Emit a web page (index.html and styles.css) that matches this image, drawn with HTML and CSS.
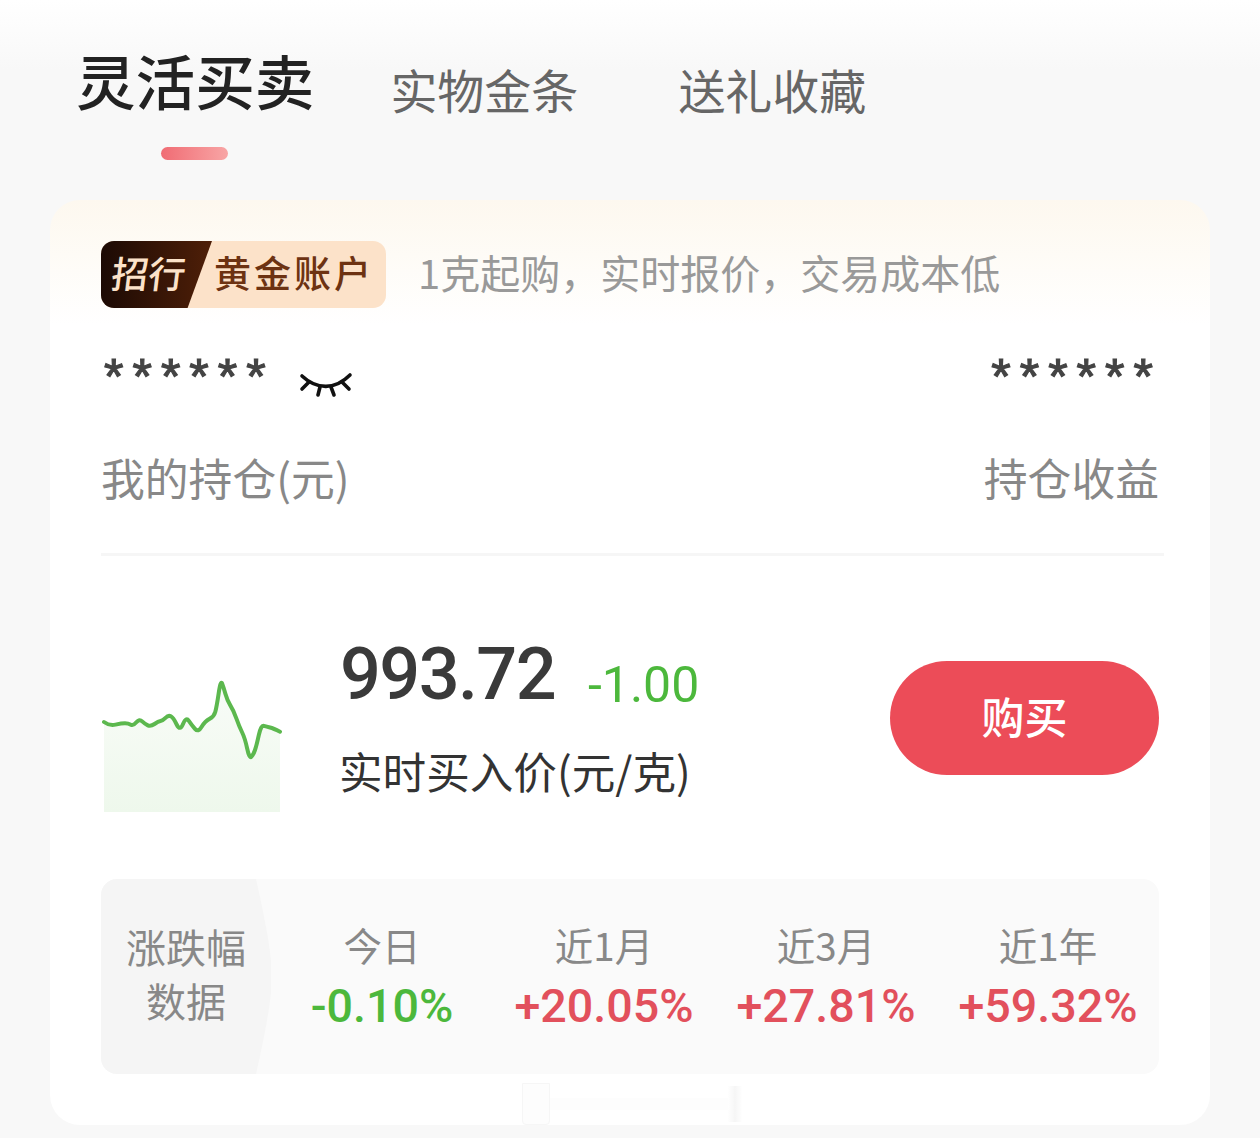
FILE: index.html
```html
<!DOCTYPE html>
<html lang="zh-CN">
<head>
  <meta charset="UTF-8" />
  <meta name="viewport" content="width=device-width, initial-scale=1.0" />
  <title>黄金账户</title>
  <link rel="stylesheet" href="styles.css">
</head>
<body>
  <nav class="tabs">
    <div class="tab tab-active">灵活买卖<span class="tab-line"></span></div>
    <div class="tab tab-second">实物金条</div>
    <div class="tab tab-third">送礼收藏</div>
  </nav>

  <main class="card">
    <div class="card-head">
      <div class="badge">
        <span class="badge-dark"><span class="badge-slant">招行</span></span>
        <span class="badge-light">黄金账户</span>
      </div>
      <p class="slogan">1克起购，实时报价，交易成本低</p>
    </div>

    <div class="holdings">
      <div class="holding">
        <div class="stars-row">
          <span class="stars">******</span>
          <svg class="eye" viewBox="0 0 54 26" width="54" height="26" fill="none" stroke="#111" stroke-width="3.6" stroke-linecap="round">
            <path d="M3 4 C18 18 36 18 51 3" />
            <path d="M3 17 L10 10" />
            <path d="M19 23 L21 15" />
            <path d="M35 23 L32 15" />
            <path d="M50 17 L43 10" />
          </svg>
        </div>
        <div class="holding-label">我的持仓(元)</div>
      </div>
      <div class="holding holding-right">
        <div class="stars-row"><span class="stars">******</span></div>
        <div class="holding-label">持仓收益</div>
      </div>
    </div>

    <div class="divider"></div>

    <div class="quote">
      <svg class="chart" viewBox="0 0 630 510" width="210" height="170">
        <defs>
          <linearGradient id="area" x1="0" y1="0" x2="0" y2="1">
            <stop offset="0" stop-color="#f9fcf8" />
            <stop offset="1" stop-color="#eef8ec" />
          </linearGradient>
        </defs>
        <path fill="url(#area)" d="M42 186 Q58 198 76.5 194 Q95 190 105 190 Q115 190 122.5 194 Q130 198 139 187 Q148 176 156.5 184 Q165 192 173.5 196 Q182 200 193.5 192 Q205 184 211.5 183 Q218 182 226.5 173.5 Q235 165 242.5 169 Q250 173 260 193.5 Q270 214 279 192 Q288 170 296.5 182.5 Q305 195 315 206.5 Q325 218 335 200.5 Q345 183 358.5 176.5 Q372 170 376 155 Q380 140 386 100 Q392 60 396 70 Q400 80 406 101 Q412 122 421 136 Q430 150 439 175 Q448 200 456.5 217.5 Q465 235 471.5 265.5 Q478 296 484 290.5 Q490 285 495 270 Q500 255 506.5 225 Q513 195 521.5 197.5 Q530 200 540 202.5 Q550 205 570 215 L570 456 L42 456 Z" />
        <path fill="none" stroke="#5cb84e" stroke-width="12" stroke-linecap="round" stroke-linejoin="round" d="M42 186 Q58 198 76.5 194 Q95 190 105 190 Q115 190 122.5 194 Q130 198 139 187 Q148 176 156.5 184 Q165 192 173.5 196 Q182 200 193.5 192 Q205 184 211.5 183 Q218 182 226.5 173.5 Q235 165 242.5 169 Q250 173 260 193.5 Q270 214 279 192 Q288 170 296.5 182.5 Q305 195 315 206.5 Q325 218 335 200.5 Q345 183 358.5 176.5 Q372 170 376 155 Q380 140 386 100 Q392 60 396 70 Q400 80 406 101 Q412 122 421 136 Q430 150 439 175 Q448 200 456.5 217.5 Q465 235 471.5 265.5 Q478 296 484 290.5 Q490 285 495 270 Q500 255 506.5 225 Q513 195 521.5 197.5 Q530 200 540 202.5 Q550 205 570 215" />
      </svg>
      <div class="price-box">
        <div class="price-row">
          <span class="price">993.72</span>
          <span class="change">-1.00</span>
        </div>
        <div class="price-label">实时买入价(元/克)</div>
      </div>
      <button class="buy" type="button">购买</button>
    </div>

    <section class="stats">
      <div class="stats-title">涨跌幅<br />数据</div>
      <div class="stat">
        <div class="stat-label">今日</div>
        <div class="stat-value down">-0.10%</div>
      </div>
      <div class="stat">
        <div class="stat-label">近1月</div>
        <div class="stat-value up">+20.05%</div>
      </div>
      <div class="stat">
        <div class="stat-label">近3月</div>
        <div class="stat-value up">+27.81%</div>
      </div>
      <div class="stat">
        <div class="stat-label">近1年</div>
        <div class="stat-value up">+59.32%</div>
      </div>
    </section>

    <div class="watermark">
      <span class="wm-box"></span>
      <span class="wm-bar"></span>
      <span class="wm-cross"></span>
    </div>
  </main>
</body>
</html>
```

FILE: styles.css
```css
body {
  margin: 0;
  height: 1138px;
  overflow: hidden;
  font-family: "Noto Sans CJK SC", "Noto Sans", sans-serif;
  background: linear-gradient(#ffffff, #f8f8f8 70px);
  color: #333;
}

/* tabs */
.tabs {
  display: flex;
  align-items: flex-start;
  height: 200px;
  padding-left: 76px;
  box-sizing: border-box;
}
.tab {
  font-size: 47px;
  line-height: 60px;
  color: #666;
  margin-top: 59px;
}
.tab-active {
  display: flex;
  flex-direction: column;
  align-items: center;
  font-size: 59.6px;
  line-height: 70px;
  font-weight: 500;
  color: #222;
  margin-top: 44px;
}
.tab-line {
  width: 67px;
  height: 13px;
  margin: 33px 1px 0 0;
  border-radius: 7px;
  background: linear-gradient(90deg, #f06c74, #f8a5a5);
}
.tab-second {
  margin-left: 76px;
}
.tab-third {
  margin-left: 100px;
}

/* card */
.card {
  position: relative;
  height: 925px;
  margin: 0 50px;
  padding: 41px 51px 0;
  box-sizing: border-box;
  border-radius: 30px;
  background: linear-gradient(#fdf8ef, #ffffff 125px);
}
.card-head {
  display: flex;
  align-items: center;
  height: 67px;
}
.badge {
  display: flex;
  width: 285px;
  height: 67px;
  border-radius: 13px;
  overflow: hidden;
  background: #fce2c9;
  font-size: 37px;
  font-weight: 500;
  line-height: 62px;
}
.badge-dark {
  width: 111px;
  padding-left: 11px;
  box-sizing: border-box;
  color: #fce2c9;
  background: linear-gradient(90deg, #1c0a04, #4f1f08);
  clip-path: polygon(0 0, 100% 0, 78% 100%, 0 100%);
}
.badge-slant {
  display: inline-block;
  transform: skewX(-7deg);
}
.badge-light {
  margin-left: 2px;
  color: #6d3212;
  letter-spacing: 3px;
}
.slogan {
  margin: -6px 0 0 32px;
  font-size: 40px;
  color: #999;
  white-space: nowrap;
}

/* holdings */
.holdings {
  display: flex;
  justify-content: space-between;
  margin-top: 34px;
}
.holding-right {
  text-align: right;
}
.stars-row {
  display: flex;
  align-items: flex-start;
  height: 103px;
}
.stars {
  font-family: "Liberation Sans", sans-serif;
  font-size: 50px;
  line-height: 58px;
  letter-spacing: 9px;
  color: #444;
  -webkit-text-stroke: 1.2px #444;
  margin: 6px 0 0 3px;
}
.holding-right .stars-row {
  justify-content: flex-end;
}
.holding-right .stars {
  margin-right: -3px;
}
.eye {
  margin: 30px 0 0 24px;
}
.holding-label {
  font-size: 43.8px;
  line-height: 64px;
  color: #888;
}

.divider {
  height: 3px;
  margin: 44px -5px 0 0;
  background: #f6f6f6;
}

/* quote */
.quote {
  display: flex;
  align-items: flex-start;
  height: 323px;
}
.chart {
  flex: none;
  margin: 104px 0 0 -11px;
}
.price-box {
  margin: 73px 0 0 39px;
}
.price-row {
  display: flex;
  align-items: flex-start;
  height: 92px;
}
.price {
  margin-left: 1px;
  font-family: Roboto, sans-serif;
  font-size: 72px;
  font-weight: 500;
  line-height: 92px;
  letter-spacing: -1.6px;
  color: #3a3a3a;
}
.change {
  margin: 10px 0 0 33px;
  font-family: Roboto, sans-serif;
  font-size: 50px;
  line-height: 92px;
  color: #4cb83c;
}
.price-label {
  margin-top: 19px;
  font-size: 43.6px;
  line-height: 60px;
  color: #333;
}
.buy {
  flex: none;
  width: 269px;
  height: 114px;
  margin: 105px 0 0 auto;
  padding: 0 0 6px;
  border: none;
  border-radius: 57px;
  background: #ec4c58;
  color: #fff;
  font-family: inherit;
  font-size: 43px;
  font-weight: 500;
}

/* stats */
.stats {
  display: grid;
  grid-template-columns: 170px repeat(4, 222px);
  height: 195px;
  border-radius: 16px;
  overflow: hidden;
  background: #fafafa;
}
.stats-title {
  display: flex;
  align-items: center;
  justify-content: center;
  padding-bottom: 8px;
  text-align: center;
  font-size: 40px;
  line-height: 54px;
  color: #888;
  background: #f5f5f5;
  clip-path: path("M0 0 H155 Q171 70 171 98 Q171 125 155 195 H0 Z");
}
.stat {
  text-align: center;
  padding-top: 38px;
}
.stat-label {
  font-size: 38.5px;
  line-height: 54px;
  color: #888;
}
.stat-value {
  margin-top: 8px;
  font-family: Roboto, sans-serif;
  font-size: 46.6px;
  font-weight: 500;
  line-height: 54px;
}
.down {
  color: #4cb83c;
}
.up {
  color: #e2505c;
}

/* faint mark over the card's bottom edge */
.watermark {
  position: absolute;
  left: 472px;
  bottom: 0;
  display: flex;
  align-items: center;
  width: 230px;
  height: 43px;
  opacity: 0.5;
}
.wm-box {
  width: 26px;
  height: 40px;
  border: 1px solid #eee;
  border-radius: 0 0 4px 4px;
  background: #fcfcfc;
}
.wm-bar {
  width: 178px;
  height: 12px;
  background: #fcfcfc;
}
.wm-cross {
  width: 14px;
  height: 36px;
  background: linear-gradient(90deg, #fff, #eee, #fff);
}
```
